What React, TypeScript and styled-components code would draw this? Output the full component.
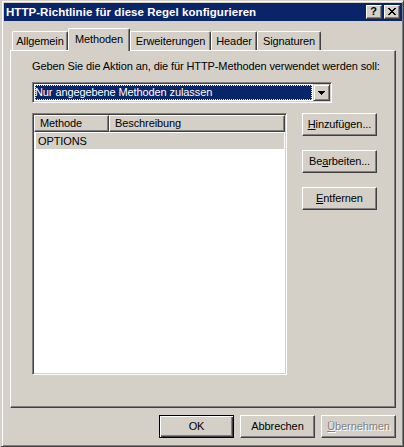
import React from "react";
import styled, { createGlobalStyle, css } from "styled-components";

const FACE = "#D4D0C8";
const SHADOW = "#808080";
const DARK = "#404040";
const NAVY = "#0A246A";

const GlobalStyle = createGlobalStyle`
  html, body { margin: 0; padding: 0; background: ${FACE}; }
  body { font-family: "Liberation Sans", Arial, sans-serif; font-size: 11px; }
  * { box-sizing: border-box; }
`;

const Window = styled.div`
  width: 404px;
  height: 447px;
  background: ${FACE};
  border-top: 1px solid ${FACE};
  border-left: 2px solid ${FACE};
  border-right: 1px solid ${DARK};
  border-bottom: 1px solid ${DARK};
  box-shadow: inset 1px 1px #fff, inset -1px -1px ${SHADOW};
  padding: 2px 1px 0 2px;
  display: flex;
  flex-direction: column;
  font-family: "Liberation Sans", Arial, sans-serif;
  font-size: 11px;
  letter-spacing: -0.1px;
  color: #000;
  overflow: hidden;
`;

const TitleBar = styled.div`
  height: 18px;
  background: ${NAVY};
  display: flex;
  align-items: center;
  padding: 0 2px;
`;

const TitleText = styled.div`
  flex: 1;
  color: #fff;
  font-weight: bold;
  font-size: 11.5px;
  line-height: 18px;
  letter-spacing: 0.05px;
  white-space: nowrap;
`;

const CaptionButton = styled.div<{ $gap?: boolean }>`
  width: 16px;
  height: 14px;
  margin-left: ${(p) => (p.$gap ? 2 : 0)}px;
  background: ${FACE};
  border-top: 1px solid #fff;
  border-left: 1px solid #fff;
  border-right: 1px solid ${DARK};
  border-bottom: 1px solid ${DARK};
  box-shadow: inset -1px -1px ${SHADOW};
  display: flex;
  align-items: center;
  justify-content: center;
  font-weight: bold;
  font-size: 11px;
  line-height: 11px;
  letter-spacing: 0;
  padding: 0 1px 1px 0;
`;

const TabStrip = styled.div`
  display: flex;
  align-items: flex-end;
  height: 22px;
  margin: 7px 0 0 8px;
  position: relative;
  z-index: 1;
`;

const Tab = styled.div<{ $w: number; $active?: boolean }>`
  width: ${(p) => p.$w}px;
  height: ${(p) => (p.$active ? 23 : 19)}px;
  margin-bottom: ${(p) => (p.$active ? -1 : 0)}px;
  padding-top: ${(p) => (p.$active ? 4 : 3)}px;
  background: ${FACE};
  border-top: 1px solid #fff;
  border-left: 1px solid #fff;
  border-right: 1px solid ${DARK};
  box-shadow: inset -1px 0 ${SHADOW};
  border-radius: 2px 2px 0 0;
  text-align: center;
  line-height: 13px;
  white-space: nowrap;
`;

const Panel = styled.div`
  margin-left: 6px;
  width: 386px;
  height: 358px;
  border-top: 1px solid #fff;
  border-left: 1px solid #fff;
  border-right: 1px solid ${DARK};
  border-bottom: 1px solid ${DARK};
  box-shadow: inset -1px -1px ${SHADOW};
  padding: 9px 0 0 21px;
  display: flex;
  flex-direction: column;
`;

const Label = styled.div`
  line-height: 13px;
  white-space: nowrap;
`;

const Combo = styled.div`
  width: 300px;
  height: 21px;
  margin-top: 9px;
  border-top: 1px solid ${SHADOW};
  border-left: 1px solid ${SHADOW};
  border-right: 1px solid #fff;
  border-bottom: 1px solid #fff;
  box-shadow: inset 1px 1px ${DARK}, inset -1px -1px ${FACE};
  background: #fff;
  padding: 1px;
  display: flex;
`;

const ComboValue = styled.div`
  flex: 1;
  margin: 1px;
  background: ${NAVY};
  color: #fff;
  line-height: 15px;
  padding-left: 0;
  outline: 1px dotted #f0ecc0;
  outline-offset: -1px;
  white-space: nowrap;
`;

const DropButton = styled.div`
  width: 17px;
  height: 17px;
  background: ${FACE};
  border-top: 1px solid ${FACE};
  border-left: 1px solid ${FACE};
  border-right: 1px solid ${DARK};
  border-bottom: 1px solid ${DARK};
  box-shadow: inset 1px 1px #fff, inset -1px -1px ${SHADOW};
  display: flex;
  align-items: center;
  justify-content: center;
`;

const ListArea = styled.div`
  display: flex;
  gap: 15px;
  margin-top: 10px;
`;

const ListView = styled.div`
  width: 255px;
  height: 262px;
  border-top: 1px solid ${SHADOW};
  border-left: 1px solid ${SHADOW};
  border-right: 1px solid #fff;
  border-bottom: 1px solid #fff;
  box-shadow: inset 1px 1px ${DARK}, inset -1px -1px ${FACE};
  background: #fff;
  padding: 1px;
  display: flex;
  flex-direction: column;
`;

const HeaderRow = styled.div`
  display: flex;
  height: 17px;
`;

const HeaderCell = styled.div<{ $w?: number }>`
  ${(p) => (p.$w ? css`width: ${p.$w}px;` : css`flex: 1;`)}
  height: 17px;
  background: ${FACE};
  border-top: 1px solid #fff;
  border-left: 1px solid #fff;
  border-right: 1px solid ${DARK};
  border-bottom: 1px solid ${DARK};
  box-shadow: inset -1px -1px ${SHADOW};
  padding-left: 5px;
  line-height: 15px;
  white-space: nowrap;
`;

const ListRow = styled.div<{ $selected?: boolean }>`
  margin: 1px 1px 0 2px;
  height: 16px;
  line-height: 16px;
  padding-left: 2px;
  background: ${(p) => (p.$selected ? FACE : "transparent")};
`;

const SideButtons = styled.div`
  display: flex;
  flex-direction: column;
  gap: 14px;
`;

const Button = styled.button<{ $default?: boolean }>`
  width: 75px;
  height: 23px;
  padding: 0;
  margin: 0;
  font-family: inherit;
  font-size: 11px;
  letter-spacing: inherit;
  line-height: 13px;
  color: #000;
  background: ${FACE};
  border: 1px solid;
  border-color: #fff ${DARK} ${DARK} #fff;
  box-shadow: inset -1px -1px ${SHADOW};
  white-space: nowrap;
  cursor: default;
  ${(p) =>
    p.$default &&
    css`
      border-color: #000;
      box-shadow: inset 1px 1px #fff, inset -1px -1px ${DARK}, inset -2px -2px ${SHADOW};
    `}
  &:disabled {
    color: ${SHADOW};
    text-shadow: 1px 1px #fff;
  }
`;

const ButtonRow = styled.div`
  display: flex;
  justify-content: flex-end;
  gap: 6px;
  margin-top: 7px;
  padding-right: 6px;
`;

const Key = styled.span`
  text-decoration: underline;
  text-underline-offset: 1px;
`;

const CloseGlyph = () => (
  <svg width="8" height="7" viewBox="0 0 8 7" shapeRendering="crispEdges">
    <path
      fill="#000"
      d="M0 0h2v1H0zM6 0h2v1H6zM1 1h2v1H1zM5 1h2v1H5zM2 2h4v1H2zM3 3h2v1H3zM2 4h4v1H2zM1 5h2v1H1zM5 5h2v1H5zM0 6h2v1H0zM6 6h2v1H6z"
    />
  </svg>
);

const DropArrow = () => (
  <svg width="7" height="4" viewBox="0 0 7 4" shapeRendering="crispEdges">
    <path fill="#000" d="M0 0h7v1H0zM1 1h5v1H1zM2 2h3v1H2zM3 3h1v1H3z" />
  </svg>
);

const tabs = [
  { label: "Allgemein", w: 56 },
  { label: "Methoden", w: 62, active: true },
  { label: "Erweiterungen", w: 81 },
  { label: "Header", w: 46 },
  { label: "Signaturen", w: 64 },
];

export default function App() {
  return (
    <>
      <GlobalStyle />
      <Window>
        <TitleBar>
          <TitleText>HTTP-Richtlinie für diese Regel konfigurieren</TitleText>
          <CaptionButton>?</CaptionButton>
          <CaptionButton $gap>
            <CloseGlyph />
          </CaptionButton>
        </TitleBar>
        <TabStrip>
          {tabs.map((t) => (
            <Tab key={t.label} $w={t.w} $active={t.active}>
              {t.label}
            </Tab>
          ))}
        </TabStrip>
        <Panel>
          <Label>Geben Sie die Aktion an, die für HTTP-Methoden verwendet werden soll:</Label>
          <Combo>
            <ComboValue>Nur angegebene Methoden zulassen</ComboValue>
            <DropButton>
              <DropArrow />
            </DropButton>
          </Combo>
          <ListArea>
            <ListView>
              <HeaderRow>
                <HeaderCell $w={75}>Methode</HeaderCell>
                <HeaderCell>Beschreibung</HeaderCell>
              </HeaderRow>
              <ListRow $selected>OPTIONS</ListRow>
            </ListView>
            <SideButtons>
              <Button>
                <Key>H</Key>inzufügen...
              </Button>
              <Button>
                Be<Key>a</Key>rbeiten...
              </Button>
              <Button>
                <Key>E</Key>ntfernen
              </Button>
            </SideButtons>
          </ListArea>
        </Panel>
        <ButtonRow>
          <Button $default>OK</Button>
          <Button>Abbrechen</Button>
          <Button disabled>
            <Key>Ü</Key>bernehmen
          </Button>
        </ButtonRow>
      </Window>
    </>
  );
}
